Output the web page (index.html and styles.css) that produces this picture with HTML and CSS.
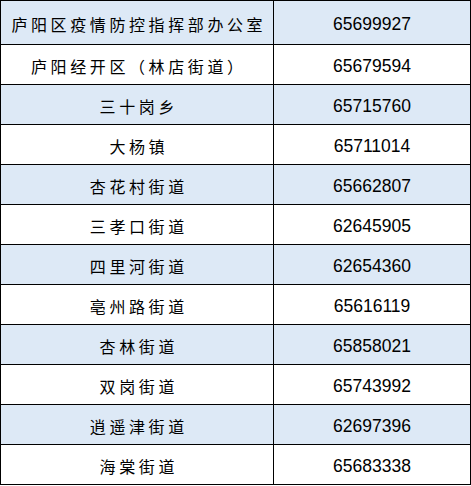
FILE: index.html
```html
<!DOCTYPE html>
<html lang="zh">
<head>
<meta charset="utf-8">
<link rel="stylesheet" href="styles.css">
</head>
<body>
<table class="contacts">
  <tr class="row first alt"><td class="name">庐阳区疫情防控指挥部办公室</td><td class="phone">65699927</td></tr>
  <tr class="row"><td class="name">庐阳经开区（林店街道）</td><td class="phone">65679594</td></tr>
  <tr class="row alt"><td class="name">三十岗乡</td><td class="phone">65715760</td></tr>
  <tr class="row"><td class="name">大杨镇</td><td class="phone">65711014</td></tr>
  <tr class="row alt"><td class="name">杏花村街道</td><td class="phone">65662807</td></tr>
  <tr class="row"><td class="name">三孝口街道</td><td class="phone">62645905</td></tr>
  <tr class="row alt"><td class="name">四里河街道</td><td class="phone">62654360</td></tr>
  <tr class="row"><td class="name">亳州路街道</td><td class="phone">65616119</td></tr>
  <tr class="row alt"><td class="name">杏林街道</td><td class="phone">65858021</td></tr>
  <tr class="row"><td class="name">双岗街道</td><td class="phone">65743992</td></tr>
  <tr class="row alt"><td class="name">逍遥津街道</td><td class="phone">62697396</td></tr>
  <tr class="row"><td class="name">海棠街道</td><td class="phone">65683338</td></tr>
</table>
</body>
</html>
```

FILE: styles.css
```css
html, body {
  margin: 0;
  padding: 0;
  background: #ffffff;
}

.contacts {
  border-collapse: collapse;
  width: 471px;
  table-layout: fixed;
  color: #000;
}

.contacts td {
  border: 1px solid #000;
  padding: 3px 0 0 0;
  height: 36px;
  text-align: center;
  vertical-align: middle;
  white-space: nowrap;
  box-sizing: content-box;
}

.row.first td {
  height: 40px;
}

.row.alt td {
  background: #dde9f6;
}

.name {
  width: 272px;
  font-family: "Noto Sans CJK SC", "Noto Sans", sans-serif;
  font-size: 16px;
  letter-spacing: 3.6px;
  text-indent: 3.6px;
  line-height: 20px;
}

.phone {
  font-family: "Liberation Sans", Arial, sans-serif;
  font-size: 17.5px;
  line-height: 20px;
}
```
